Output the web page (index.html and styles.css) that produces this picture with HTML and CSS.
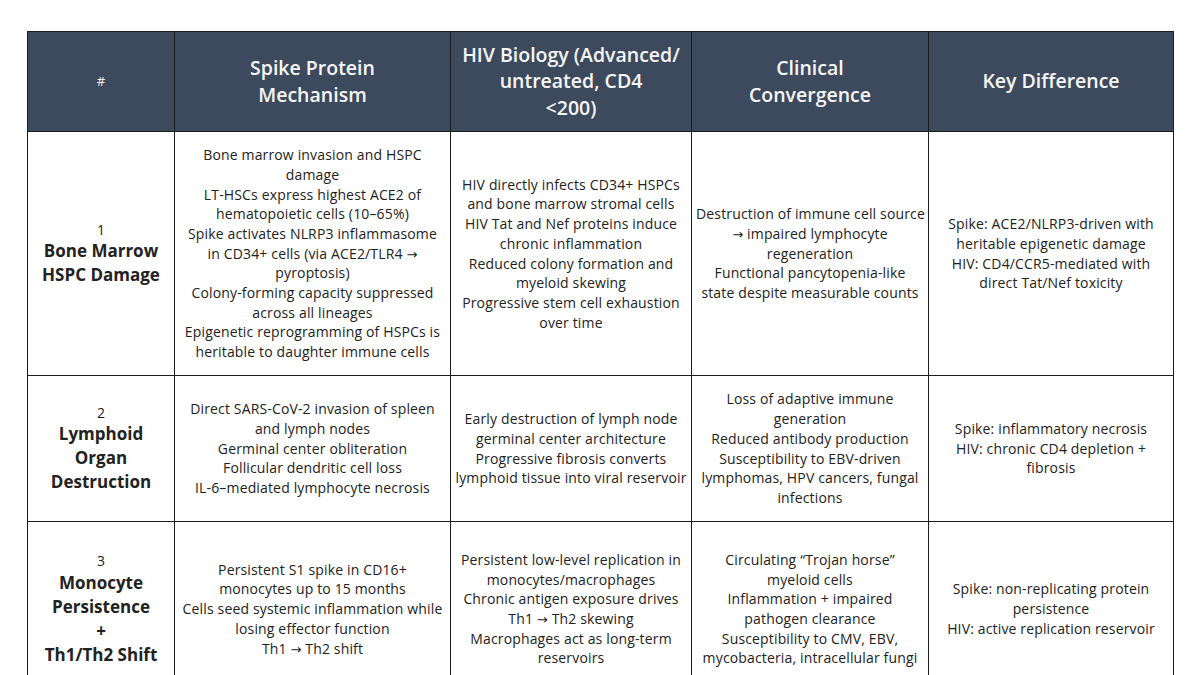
FILE: index.html
```html
<!DOCTYPE html>
<html>
<head>
<meta charset="utf-8">
<link rel="stylesheet" href="styles.css">
</head>
<body>
<table class="cmp">
  <colgroup>
    <col class="c-num"><col class="c-spike"><col class="c-hiv"><col class="c-clin"><col class="c-key">
  </colgroup>
  <thead>
    <tr class="head">
      <th class="hash">#</th>
      <th>Spike Protein<br>Mechanism</th>
      <th>HIV Biology (Advanced/<br>untreated, CD4<br>&lt;200)</th>
      <th>Clinical<br>Convergence</th>
      <th>Key Difference</th>
    </tr>
  </thead>
  <tbody>
    <tr class="r1">
      <td class="num">1<br><b>Bone Marrow<br>HSPC Damage</b></td>
      <td>Bone marrow invasion and HSPC<br>damage<br>LT-HSCs express highest ACE2 of<br>hematopoietic cells (10–65%)<br>Spike activates NLRP3 inflammasome<br>in CD34+ cells (via ACE2/TLR4 <span class="arr">→</span><br>pyroptosis)<br>Colony-forming capacity suppressed<br>across all lineages<br>Epigenetic reprogramming of HSPCs is<br>heritable to daughter immune cells</td>
      <td>HIV directly infects CD34+ HSPCs<br>and bone marrow stromal cells<br>HIV Tat and Nef proteins induce<br>chronic inflammation<br>Reduced colony formation and<br>myeloid skewing<br>Progressive stem cell exhaustion<br>over time</td>
      <td>Destruction of immune cell source<br><span class="arr">→</span> impaired lymphocyte<br>regeneration<br>Functional pancytopenia-like<br>state despite measurable counts</td>
      <td>Spike: ACE2/NLRP3-driven with<br>heritable epigenetic damage<br>HIV: CD4/CCR5-mediated with<br>direct Tat/Nef toxicity</td>
    </tr>
    <tr class="r2">
      <td class="num">2<br><b>Lymphoid<br>Organ<br>Destruction</b></td>
      <td>Direct SARS-CoV-2 invasion of spleen<br>and lymph nodes<br>Germinal center obliteration<br>Follicular dendritic cell loss<br>IL-6–mediated lymphocyte necrosis</td>
      <td>Early destruction of lymph node<br>germinal center architecture<br>Progressive fibrosis converts<br>lymphoid tissue into viral reservoir</td>
      <td>Loss of adaptive immune<br>generation<br>Reduced antibody production<br>Susceptibility to EBV-driven<br>lymphomas, HPV cancers, fungal<br>infections</td>
      <td>Spike: inflammatory necrosis<br>HIV: chronic CD4 depletion +<br>fibrosis</td>
    </tr>
    <tr class="r3">
      <td class="num">3<br><b>Monocyte<br>Persistence<br>+<br>Th1/Th2 Shift</b></td>
      <td>Persistent S1 spike in CD16+<br>monocytes up to 15 months<br>Cells seed systemic inflammation while<br>losing effector function<br>Th1 <span class="arr">→</span> Th2 shift</td>
      <td>Persistent low-level replication in<br>monocytes/macrophages<br>Chronic antigen exposure drives<br>Th1 <span class="arr">→</span> Th2 skewing<br>Macrophages act as long-term<br>reservoirs</td>
      <td>Circulating “Trojan horse”<br>myeloid cells<br>Inflammation + impaired<br>pathogen clearance<br>Susceptibility to CMV, EBV,<br>mycobacteria, intracellular fungi</td>
      <td>Spike: non-replicating protein<br>persistence<br>HIV: active replication reservoir</td>
    </tr>
  </tbody>
</table>
</body>
</html>
```

FILE: styles.css
```css
html, body {
  margin: 0;
  padding: 0;
  background: #ffffff;
}
body {
  font-family: "Open Sans", "Liberation Sans", sans-serif;
  color: #222222;
  overflow: hidden;
}
.cmp {
  border-collapse: collapse;
  table-layout: fixed;
  width: 1146px;
  margin: 31px 0 0 27px;
}
.c-num { width: 147px; }
.c-spike { width: 276px; }
.c-hiv { width: 241px; }
.c-clin { width: 237px; }
.c-key { width: 245px; }

.cmp th, .cmp td {
  border: 1px solid #1c1c1c;
  text-align: center;
  vertical-align: middle;
  white-space: nowrap;
  padding: 0 4px;
}
.head th {
  background: #3d495c;
  color: #f6f7f9;
  font-weight: 600;
  font-size: 19.5px;
  line-height: 26.5px;
  height: 99px;
}
.head th.hash {
  font-size: 13px;
  font-weight: 400;
}
.cmp td {
  font-size: 14px;
  line-height: 19.7px;
  letter-spacing: 0.15px;
}
.cmp td.num b {
  font-size: 17px;
  line-height: 24px;
  font-weight: 700;
  letter-spacing: 0;
}
.arr {
  font-family: "DejaVu Sans", "Liberation Sans", sans-serif;
  font-size: 13px;
  line-height: 1;
}
.r1 td { height: 243px; }
.r2 td { height: 145px; }
.r3 td { height: 174px; }
```
